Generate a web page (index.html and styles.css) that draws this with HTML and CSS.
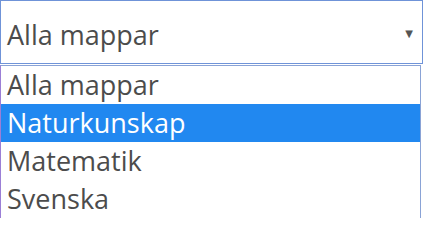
FILE: index.html
```html
<!DOCTYPE html>
<html lang="sv">
<head>
<meta charset="utf-8">
<link rel="stylesheet" href="styles.css">
</head>
<body>
<div class="wrap">
  <div class="select">
    <span class="value">Alla mappar</span>
    <span class="arrow">▼</span>
  </div>
  <ul class="list">
    <li class="opt">Alla mappar</li>
    <li class="opt active">Naturkunskap</li>
    <li class="opt">Matematik</li>
    <li class="opt">Svenska</li>
  </ul>
</div>
</body>
</html>
```
FILE: styles.css
```css
html, body {
  margin: 0;
  padding: 0;
  background: #ffffff;
}
body {
  font-family: "Open Sans", "DejaVu Sans", sans-serif;
  color: #4c4c4c;
  width: 423px;
  height: 219px;
  overflow: hidden;
}
.wrap {
  display: flex;
  flex-direction: column;
  gap: 1px;
}
.select {
  box-sizing: border-box;
  height: 64px;
  border: 1px solid #6f93d8;
  display: flex;
  align-items: center;
  justify-content: space-between;
  padding: 0 9px 0 6px;
  font-size: 27px;
}
.value {
  line-height: 1;
  position: relative;
  top: 2px;
}
.arrow {
  font-size: 10px;
  color: #555555;
  font-family: "DejaVu Sans", sans-serif;
  position: relative;
  top: 1px;
}
.list {
  list-style: none;
  margin: 0;
  padding: 0;
  width: 421px;
  box-sizing: border-box;
  border: 1px solid #8aa3d6;
  border-left-color: #9b7fd6;
  border-bottom: none;
  font-size: 27px;
}
.opt {
  height: 38px;
  line-height: 38px;
  padding-left: 6px;
}
.opt.active {
  background: #2188f0;
  color: #ffffff;
}
```
